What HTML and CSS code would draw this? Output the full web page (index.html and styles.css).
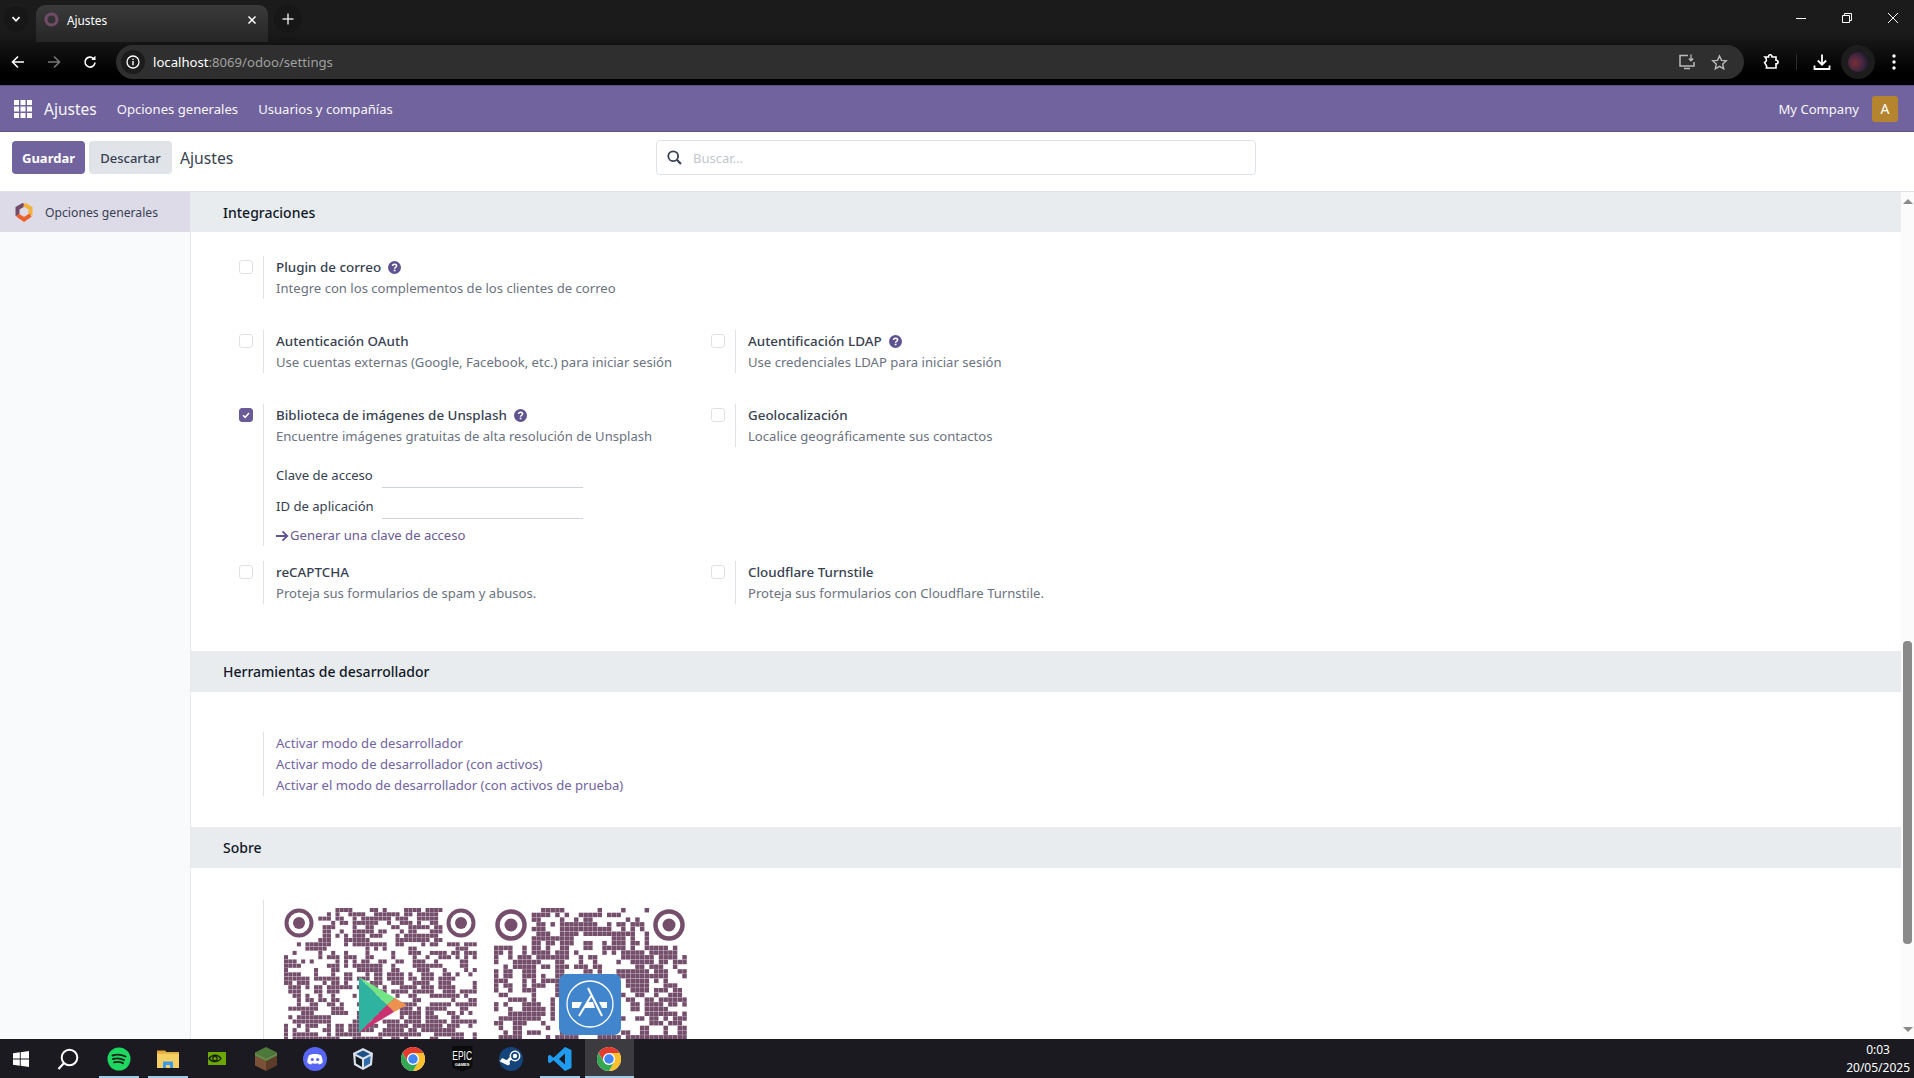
FILE: index.html
```html
<!DOCTYPE html>
<html lang="es">
<head>
    <meta charset="UTF-8">
    <title>Ajustes</title>
    <link rel="stylesheet" href="styles.css">
</head>
<body>
    <!-- Iconos reutilizados -->
    <svg class="defs" aria-hidden="true">
        <symbol id="help" viewBox="0 0 12 12">
            <circle cx="6" cy="6" r="6" fill="#5f5290"/>
            <path d="M4.2 4.7C4.2 3.6 5 3 6 3s1.9.6 1.9 1.6c0 1.4-1.8 1.3-1.8 2.5" fill="none" stroke="#fff" stroke-width="1.4"/>
            <rect x="5.3" y="8" width="1.6" height="1.5" fill="#fff"/>
        </symbol>
        <symbol id="chrome" viewBox="-24 -24 48 48">
            <circle r="24" fill="#fff"/>
            <path d="M-20.8-12A24 24 0 0 1 20.8-12H0A12 12 0 0 0-10.4 6Z" fill="#e33b2e"/>
            <path d="M-20.8-12A24 24 0 0 1 20.8-12H0A12 12 0 0 0-10.4 6Z" fill="#fbc02d" transform="rotate(120)"/>
            <path d="M-20.8-12A24 24 0 0 1 20.8-12H0A12 12 0 0 0-10.4 6Z" fill="#34a853" transform="rotate(240)"/>
            <circle r="9.5" fill="#4285f4"/>
        </symbol>
    </svg>

    <!-- Navegador: pestañas -->
    <div class="browser">
        <div class="tabstrip">
            <div class="tab-search">
                <svg width="10" height="10" viewBox="0 0 10 10"><path d="M1.5 3.2 5 6.8l3.5-3.6" fill="none" stroke="#fff" stroke-width="1.7"/></svg>
            </div>
            <div class="tab">
                <svg width="15" height="15" viewBox="0 0 15 15"><circle cx="7.5" cy="7.5" r="5.5" fill="none" stroke="#714b67" stroke-width="3.2"/></svg>
                <span class="tab-title">Ajustes</span>
                <svg class="tab-close" width="10" height="10" viewBox="0 0 10 10"><path d="M1.5 1.5l7 7M8.5 1.5l-7 7" stroke="#fff" stroke-width="1.5"/></svg>
            </div>
            <div class="tab-new">
                <svg width="12" height="12" viewBox="0 0 12 12"><path d="M6 .5v11M.5 6h11" stroke="#ddd" stroke-width="1.5"/></svg>
            </div>
            <div class="window-controls">
                <svg width="12" height="12" viewBox="0 0 12 12"><path d="M1 6.5h10" stroke="#fff"/></svg>
                <svg width="12" height="12" viewBox="0 0 12 12"><path d="M1.5 3.5h7v7h-7zM3.5 3.5v-2h7v7h-2" fill="none" stroke="#fff"/></svg>
                <svg width="12" height="12" viewBox="0 0 12 12"><path d="M1 1l10 10M11 1 1 11" stroke="#fff"/></svg>
            </div>
        </div>

        <!-- Navegador: barra de direcciones -->
        <div class="toolbar">
            <svg class="nav-icon" width="16" height="16" viewBox="0 0 16 16"><path d="M14 8H2.5M8 2.5 2.5 8 8 13.5" fill="none" stroke="#fff" stroke-width="1.6"/></svg>
            <svg class="nav-icon" width="16" height="16" viewBox="0 0 16 16"><path d="M2 8h11.5M8 2.5 13.5 8 8 13.5" fill="none" stroke="#777" stroke-width="1.6"/></svg>
            <svg class="nav-icon" width="16" height="16" viewBox="0 0 16 16"><path d="M13 8.5A5 5 0 1 1 11.5 4.5" fill="none" stroke="#fff" stroke-width="1.6"/><path d="M13.5 1.8V6H9.3z" fill="#fff"/></svg>
            <div class="omnibox">
                <span class="site-info">
                    <svg width="14" height="14" viewBox="0 0 14 14"><circle cx="7" cy="7" r="6" fill="none" stroke="#fff" stroke-width="1.3"/><path d="M7 6v4.2M7 3.7V5" stroke="#fff" stroke-width="1.4"/></svg>
                </span>
                <span class="url"><span class="url-host">localhost</span>:8069/odoo/settings</span>
                <svg class="omni-icon" width="18" height="18" viewBox="0 0 18 18"><path d="M10 2.5H2V13h14V9M6 15.5h6" fill="none" stroke="#bbb" stroke-width="1.5"/><path d="M13 1.5v6M10.8 5.5 13 7.8l2.2-2.3" fill="none" stroke="#bbb" stroke-width="1.3"/></svg>
                <svg class="omni-icon" width="17" height="17" viewBox="0 0 17 17"><path d="M8.5 2l2 4.4 4.8.5-3.600 3.200 1 4.700-4.200-2.400-4.200 2.400 1-4.700L1.700 6.900l4.800-.5z" fill="none" stroke="#bbb" stroke-width="1.4"/></svg>
            </div>
            <svg class="ext-icon" width="18" height="18" viewBox="0 0 18 18"><path d="M3 4h3.500c0-3 3.500-3 3.500 0H14v3.200c2.800 0 2.800 3.600 0 3.600V15H4.500c.9-3-2-5-2-5.500C5 8.500 5 6 3 4z" fill="none" stroke="#fff" stroke-width="1.6"/></svg>
            <span class="toolbar-sep"></span>
            <svg class="dl-icon" width="18" height="18" viewBox="0 0 18 18"><path d="M9 1.5v10M4.800 7.500 9 11.700l4.200-4.200M1.500 12.500V16h15v-3.500" fill="none" stroke="#fff" stroke-width="1.8"/></svg>
            <span class="profile"><span class="profile-pic"></span></span>
            <svg class="menu-icon" width="4" height="16" viewBox="0 0 4 16"><circle cx="2" cy="2" r="1.7" fill="#fff"/><circle cx="2" cy="8" r="1.7" fill="#fff"/><circle cx="2" cy="14" r="1.7" fill="#fff"/></svg>
        </div>
    </div>

    <!-- Barra de Odoo -->
    <header class="o-navbar">
        <svg class="apps-icon" width="18" height="18" viewBox="0 0 18 18" fill="#fff">
            <rect width="5" height="5"/><rect x="6.5" width="5" height="5"/><rect x="13" width="5" height="5"/>
            <rect y="6.5" width="5" height="5"/><rect x="6.5" y="6.5" width="5" height="5"/><rect x="13" y="6.5" width="5" height="5"/>
            <rect y="13" width="5" height="5"/><rect x="6.5" y="13" width="5" height="5"/><rect x="13" y="13" width="5" height="5"/>
        </svg>
        <span class="brand">Ajustes</span>
        <a class="nav-link">Opciones generales</a>
        <a class="nav-link">Usuarios y compañías</a>
        <span class="company">My Company</span>
        <span class="user-badge">A</span>
    </header>

    <!-- Panel de control -->
    <div class="control-panel">
        <button class="btn btn-primary">Guardar</button>
        <button class="btn btn-secondary">Descartar</button>
        <span class="breadcrumb">Ajustes</span>
        <div class="searchbar">
            <svg width="15" height="15" viewBox="0 0 14 14"><circle cx="5.8" cy="5.8" r="4.6" fill="none" stroke="#374151" stroke-width="1.7"/><path d="M9.2 9.2 13 13" stroke="#374151" stroke-width="2"/></svg>
            <span class="search-placeholder">Buscar...</span>
        </div>
    </div>

    <div class="main">
        <!-- Menú lateral -->
        <aside class="sidebar">
            <div class="side-item">
                <svg width="18" height="20" viewBox="0 0 18 20">
                    <path d="M9 2.5 2.500 6.200v7.600" fill="none" stroke="#714b67" stroke-width="4"/>
                    <path d="M9 2.5l6.500 3.700v7" fill="none" stroke="#f3b23c" stroke-width="4"/>
                    <path d="M2.500 13.200 9 17.500l6.500-4.300" fill="none" stroke="#e8622a" stroke-width="4"/>
                </svg>
                <span>Opciones generales</span>
            </div>
        </aside>

        <!-- Contenido de ajustes -->
        <div class="content">
            <h2 class="section-title section-first">Integraciones</h2>
            <section class="settings-grid">
                <div class="setting">
                    <span class="check"></span>
                    <div class="setting-body">
                        <div class="setting-name">Plugin de correo <svg class="help"><use href="#help"/></svg></div>
                        <div class="setting-desc">Integre con los complementos de los clientes de correo</div>
                    </div>
                </div>
                <div></div>

                <div class="setting">
                    <span class="check"></span>
                    <div class="setting-body">
                        <div class="setting-name">Autenticación OAuth</div>
                        <div class="setting-desc">Use cuentas externas (Google, Facebook, etc.) para iniciar sesión</div>
                    </div>
                </div>
                <div class="setting">
                    <span class="check"></span>
                    <div class="setting-body">
                        <div class="setting-name">Autentificación LDAP <svg class="help"><use href="#help"/></svg></div>
                        <div class="setting-desc">Use credenciales LDAP para iniciar sesión</div>
                    </div>
                </div>

                <div class="setting setting-open">
                    <span class="check checked">
                        <svg width="10" height="10" viewBox="0 0 10 10"><path d="M2 5.200 4.200 7.300 8 3" fill="none" stroke="#fff" stroke-width="1.5"/></svg>
                    </span>
                    <div class="setting-body">
                        <div class="setting-name">Biblioteca de imágenes de Unsplash <svg class="help"><use href="#help"/></svg></div>
                        <div class="setting-desc">Encuentre imágenes gratuitas de alta resolución de Unsplash</div>
                        <div class="field field-first">
                            <label>Clave de acceso</label>
                            <span class="field-input"></span>
                        </div>
                        <div class="field">
                            <label>ID de aplicación</label>
                            <span class="field-input"></span>
                        </div>
                        <a class="key-link">
                            <svg width="13" height="12" viewBox="0 0 13 12"><path d="M0 6h11M6.500 1.300 11.300 6 6.500 10.700" fill="none" stroke="#5f5290" stroke-width="1.8"/></svg>Generar una clave de acceso
                        </a>
                    </div>
                </div>
                <div class="setting">
                    <span class="check"></span>
                    <div class="setting-body">
                        <div class="setting-name">Geolocalización</div>
                        <div class="setting-desc">Localice geográficamente sus contactos</div>
                    </div>
                </div>

                <div class="setting">
                    <span class="check"></span>
                    <div class="setting-body">
                        <div class="setting-name">reCAPTCHA</div>
                        <div class="setting-desc">Proteja sus formularios de spam y abusos.</div>
                    </div>
                </div>
                <div class="setting">
                    <span class="check"></span>
                    <div class="setting-body">
                        <div class="setting-name">Cloudflare Turnstile</div>
                        <div class="setting-desc">Proteja sus formularios con Cloudflare Turnstile.</div>
                    </div>
                </div>
            </section>

            <h2 class="section-title">Herramientas de desarrollador</h2>
            <section class="dev-tools">
                <div class="setting-body">
                    <a class="dev-link">Activar modo de desarrollador</a>
                    <a class="dev-link">Activar modo de desarrollador (con activos)</a>
                    <a class="dev-link">Activar el modo de desarrollador (con activos de prueba)</a>
                </div>
            </section>

            <h2 class="section-title">Sobre</h2>
            <section class="about">
                <div class="qr-row">
                    <svg class="qr" data-modules="45" data-seed="7341" viewBox="0 0 193 193">
                        <circle cx="15" cy="15" r="12.5" fill="none" stroke="#744e6b" stroke-width="4"/>
                        <circle cx="15" cy="15" r="6" fill="#744e6b"/>
                        <circle cx="177" cy="15" r="12.5" fill="none" stroke="#744e6b" stroke-width="4"/>
                        <circle cx="177" cy="15" r="6" fill="#744e6b"/>
                        <path d="M75 69 103 97 75 125Z" fill="#2db3a0"/>
                        <path d="M75 69 111 90 103 97Z" fill="#73e585"/>
                        <path d="M111 90 123 97 110 104 103 97Z" fill="#ec9150"/>
                        <path d="M75 125 103 97 110 104Z" fill="#cb3370"/>
                    </svg>
                    <svg class="qr" data-modules="41" data-seed="2219" viewBox="0 0 193 193">
                        <circle cx="17" cy="17" r="13.5" fill="none" stroke="#744e6b" stroke-width="4.5"/>
                        <circle cx="17" cy="17" r="6.5" fill="#744e6b"/>
                        <circle cx="175" cy="17" r="13.5" fill="none" stroke="#744e6b" stroke-width="4.5"/>
                        <circle cx="175" cy="17" r="6.5" fill="#744e6b"/>
                        <rect x="65" y="66" width="62" height="61" rx="7" fill="#4186cc"/>
                        <circle cx="96" cy="96" r="23" fill="none" stroke="#fff" stroke-width="1.3"/>
                        <path d="M94 80 108 108M97 88 85 108" fill="none" stroke="#fff" stroke-width="2"/>
                        <path d="M78 94h10l-3 6h-7zM93 94h6l2 6H90zM105 94h8v6h-5z" fill="#fff"/>
                    </svg>
                </div>
            </section>
        </div>

        <!-- Barra de desplazamiento -->
        <div class="scrollbar">
            <span class="scroll-up"></span>
            <span class="scroll-thumb"></span>
            <span class="scroll-down"></span>
        </div>
    </div>

    <!-- Barra de tareas de Windows -->
    <footer class="taskbar">
        <div class="task task-win">
            <svg width="16" height="16" viewBox="0 0 16 16" fill="#fff"><path d="M0 2.300 6.800 1.300v6.300H0zM7.700 1.200 16 0v7.600H7.700zM0 8.400h6.800v6.300L0 13.700zM7.700 8.400H16V16l-8.300-1.200z"/></svg>
        </div>
        <div class="task task-find">
            <svg width="22" height="22" viewBox="0 0 22 22"><circle cx="12.5" cy="9.5" r="7.8" fill="none" stroke="#fff" stroke-width="2"/><path d="M7 15 1.500 21" stroke="#fff" stroke-width="2.2"/></svg>
        </div>
        <div class="task open">
            <svg width="24" height="24" viewBox="0 0 24 24"><circle cx="12" cy="12" r="11.5" fill="#1ed760"/><path d="M5.500 8.500c4-1.300 9-1 13 1M6 12c3.500-1 7.500-.8 11 1M7 15.300c3-.8 6-.6 9 .9" fill="none" stroke="#14241a" stroke-width="1.9" stroke-linecap="round"/></svg>
        </div>
        <div class="task open">
            <svg width="22" height="20" viewBox="0 0 22 20"><path d="M0 1.500h8l2 2H0z" fill="#e2a52b"/><rect y="3" width="22" height="16" fill="#f4cf63"/><rect y="3" width="22" height="2" fill="#e5b345"/><path d="M6 19v-6.500h10V19h-3v-3H9v3z" fill="#3d9be9"/></svg>
        </div>
        <div class="task">
            <svg width="18" height="13" viewBox="0 0 18 13"><rect width="18" height="13" fill="#6aa800"/><path d="M1 6.500C4 2.500 10 1.800 13 6.500 10 11 4 10.500 1 6.500z" fill="none" stroke="#1b2108" stroke-width="1.3"/><circle cx="7" cy="6.500" r="2.2" fill="none" stroke="#1b2108" stroke-width="1.2"/></svg>
        </div>
        <div class="task">
            <svg width="22" height="24" viewBox="0 0 22 24"><path d="M11 0 22 5.500 11 11 0 5.500z" fill="#4d7a3a"/><path d="M0 5.500 11 11v13L0 18.500z" fill="#7a5036"/><path d="M22 5.500 11 11v13l11-5.500z" fill="#5c3c28"/><path d="M0 5.500 11 11l11-5.500v3L11 14 0 8.500z" fill="#5d8a48"/></svg>
        </div>
        <div class="task">
            <svg width="24" height="24" viewBox="0 0 24 24"><circle cx="12" cy="12" r="12" fill="#5865f2"/><path d="M6 8.300c3.500-1.800 8.500-1.800 12 0 1.300 2.500 1.800 5 1.600 7.500-1.300 1-2.600 1.500-3.700 1.800l-.9-1.400c-2 .6-4 .6-6 0l-.9 1.400c-1.100-.3-2.400-.8-3.700-1.800C4.200 13.300 4.700 10.800 6 8.300z" fill="#fff"/><circle cx="9.300" cy="12.500" r="1.6" fill="#5865f2"/><circle cx="14.700" cy="12.500" r="1.6" fill="#5865f2"/></svg>
        </div>
        <div class="task task-vbox">
            <svg width="22" height="24" viewBox="0 0 22 24"><path d="M11 1 21 6l-1 12-9 5-9-5L1 6z" fill="#d8e0ea"/><path d="M11 3.500 18 7l-7 3.500L4 7z" fill="#1d4f86"/><path d="M3.500 9 10 12.500V20l-6-3.400z" fill="#14181f"/><path d="M18.500 9 12 12.500V20l6-3.400z" fill="#2f6ba8"/></svg>
        </div>
        <div class="task"><svg width="24" height="24"><use href="#chrome"/></svg></div>
        <div class="task">
            <div class="epic"><span class="epic-big">EPIC</span><span class="epic-small">GAMES</span></div>
        </div>
        <div class="task">
            <svg width="24" height="24" viewBox="0 0 24 24"><circle cx="12" cy="12" r="12" fill="#14447a"/><path d="M0 13.500 7 16.500 11 13" fill="#fff"/><path d="M1 14.500 8 18c2.500 1 4-2 2-3.800L3 11z" fill="#fff"/><circle cx="16" cy="9" r="4.7" fill="none" stroke="#fff" stroke-width="1.5"/><circle cx="16" cy="9" r="2.2" fill="#fff"/><path d="M12 11 8 15" stroke="#fff" stroke-width="3"/></svg>
        </div>
        <div class="task open">
            <svg width="24" height="24" viewBox="0 0 24 24"><path d="M17 0 23.500 3V21L17 24 5.500 13.200 1.800 16.200 0 15V9l1.800-1.200 3.700 3L17 0zm0 6.500-6 5.500 6 5.500z" fill="#1f9cf0"/></svg>
        </div>
        <div class="task active">
            <svg width="24" height="24"><use href="#chrome"/></svg>
        </div>
        <div class="clock">
            <div>0:03</div>
            <div>20/05/2025</div>
        </div>
    </footer>

    <script src="qr.js"></script>
</body>
</html>
```

FILE: styles.css
```css
/* General */
* {
    box-sizing: border-box;
}

body {
    margin: 0;
    height: 1078px;
    display: flex;
    flex-direction: column;
    overflow: hidden;
    font-family: "Noto Sans", "Open Sans", sans-serif;
    font-size: 13.1px;
    color: #374151;
    background-color: #ffffff;
}

.defs {
    width: 0;
    height: 0;
    display: block;
}

/* Navegador */
.browser {
    flex: none;
    height: 85px;
    background: linear-gradient(#1b1b1b 0, #1b1b1b 32px, #000000 74px);
}

.tabstrip {
    height: 42px;
    display: flex;
    align-items: flex-end;
    padding-left: 4px;
    color: #ffffff;
}

.tab-search {
    width: 24px;
    height: 26px;
    margin: 0 8px 10px 0;
    display: flex;
    align-items: center;
    justify-content: center;
    border-radius: 50%;
    background-color: #171717;
}

.tab {
    width: 232px;
    height: 37px;
    display: flex;
    align-items: center;
    padding: 0 11px 8px 8px;
    border-radius: 9px 9px 0 0;
    background: linear-gradient(#3a3a3a, #262626);
    font-size: 11.8px;
}

.tab-title {
    margin-left: 8px;
}

.tab-close {
    margin-left: auto;
}

.tab-new {
    width: 28px;
    height: 28px;
    margin: 0 0 9px 6px;
    display: flex;
    align-items: center;
    justify-content: center;
    border-radius: 50%;
    background-color: #171717;
}

.window-controls {
    margin-left: auto;
    height: 36px;
    display: flex;
    align-items: center;
    gap: 34px;
    padding: 0 15px 12px 0;
}

.toolbar {
    height: 43px;
    display: flex;
    align-items: center;
    padding: 0 0 3px 10px;
}

.nav-icon {
    margin-right: 20px;
}

.omnibox {
    flex: none;
    width: 1628px;
    height: 34px;
    margin-left: -2px;
    display: flex;
    align-items: center;
    padding: 0 16px 0 5px;
    border-radius: 17px;
    background-color: #2f2f2f;
    font-size: 13.15px;
    color: #a0a0a0;
}

.site-info {
    width: 24px;
    height: 24px;
    display: flex;
    align-items: center;
    justify-content: center;
    border-radius: 50%;
    background-color: #1c1c1c;
}

.url {
    margin-left: 8px;
    white-space: nowrap;
}

.url-host {
    color: #ffffff;
}

.omni-icon {
    margin-left: 15px;
}

.url + .omni-icon {
    margin-left: auto;
}

.ext-icon {
    margin-left: 18px;
}

.toolbar-sep {
    width: 1px;
    height: 16px;
    margin: 0 16px;
    background-color: #2c2c2c;
}

.profile {
    width: 34px;
    height: 34px;
    margin-left: 10px;
    display: flex;
    align-items: center;
    justify-content: center;
    border-radius: 50%;
    background-color: #1d1d1d;
}

.profile-pic {
    width: 20px;
    height: 20px;
    border-radius: 50%;
    background: radial-gradient(circle at 35% 55%, #7a2f3a, #34223f 60%, #111118);
}

.menu-icon {
    margin-left: 17px;
}

/* Barra de Odoo */
.o-navbar {
    flex: none;
    height: 47px;
    display: flex;
    align-items: center;
    padding: 0 16px 0 14px;
    background-color: #71639e;
    border-top: 1px solid #5b4f80;
    border-bottom: 1px solid #5f5288;
    color: #ffffff;
}

.brand {
    margin-left: 12px;
    font-size: 15.5px;
    opacity: 0.95;
}

.nav-link {
    margin-left: 20px;
    opacity: 0.95;
}

.company {
    margin-left: auto;
    opacity: 0.95;
}

.user-badge {
    width: 26px;
    height: 26px;
    margin-left: 13px;
    display: flex;
    align-items: center;
    justify-content: center;
    border-radius: 3px;
    background-color: #b5842f;
    font-size: 14px;
}

/* Panel de control */
.control-panel {
    flex: none;
    height: 60px;
    display: flex;
    align-items: center;
    padding: 0 0 8px 12px;
    border-bottom: 1px solid #dee2e6;
}

.btn {
    height: 33px;
    border: none;
    border-radius: 4px;
    font-family: inherit;
    font-size: 13px;
    padding: 0;
}

.btn-primary {
    width: 73px;
    background-color: #71639e;
    color: #ffffff;
    font-weight: 700;
}

.btn-secondary {
    width: 83px;
    margin-left: 4px;
    background-color: #e0e3e8;
    color: #374151;
    font-weight: 500;
}

.breadcrumb {
    width: 476px;
    margin-left: 8px;
    font-size: 15.7px;
}

.searchbar {
    width: 600px;
    height: 35px;
    display: flex;
    align-items: center;
    padding-left: 10px;
    border: 1px solid #dee2e6;
    border-radius: 4px;
}

.search-placeholder {
    margin-left: 11px;
    color: #c3c7cd;
    font-size: 13px;
}

/* Contenido principal */
.main {
    flex: 1;
    min-height: 0;
    display: flex;
    overflow: hidden;
}

.sidebar {
    flex: none;
    width: 191px;
    background-color: #f9fafb;
    border-right: 1px solid #e7e9ed;
}

.side-item {
    height: 40px;
    display: flex;
    align-items: center;
    gap: 12px;
    padding-left: 15px;
    background-color: #dedbe8;
    font-size: 12.2px;
}

.content {
    flex: none;
    width: 1710px;
    overflow: hidden;
}

.section-title {
    height: 41px;
    margin: 0;
    padding-left: 32px;
    line-height: 41px;
    font-size: 14px;
    font-weight: 500;
    color: #111827;
    background-color: #e9ecef;
}

.section-first {
    height: 40px;
    line-height: 42px;
}

.settings-grid {
    display: grid;
    grid-template-columns: 472px 472px;
    align-items: start;
    padding: 24px 0 16px 48px;
}

.setting {
    display: flex;
    margin-bottom: 31px;
}

.setting-open {
    margin-bottom: 15px;
}

.check {
    flex: none;
    width: 14px;
    height: 14px;
    margin: 4px 10px 0 0;
    display: flex;
    align-items: center;
    justify-content: center;
    border: 1px solid #dee2e6;
    border-radius: 3px;
}

.checked {
    border-color: #6a5a98;
    background-color: #6a5a98;
}

.setting-body {
    padding: 1px 0 0 12px;
    border-left: 1px solid #dee2e6;
    line-height: 21px;
}

.setting-name {
    display: flex;
    align-items: center;
    font-size: 13.4px;
    font-weight: 500;
}

.help {
    width: 13px;
    height: 13px;
    margin-left: 7px;
}

.setting-desc {
    color: #6b7280;
}

.field {
    height: 31px;
    display: flex;
    align-items: flex-end;
}

.field-first {
    margin-top: 10px;
}

.field label {
    width: 106px;
    padding-bottom: 2px;
}

.field-input {
    width: 201px;
    height: 1px;
    background-color: #ced4da;
}

.key-link {
    display: flex;
    align-items: center;
    margin-top: 6px;
    color: #6b5b93;
}

.key-link svg {
    margin-right: 1px;
}

.dev-tools {
    padding: 40px 0 31px 72px;
}

.dev-link {
    display: block;
    color: #71639e;
}

.about {
    padding: 32px 0 0 72px;
}

.qr-row {
    height: 300px;
    display: flex;
    gap: 17px;
    padding: 8px 0 0 20px;
    border-left: 1px solid #dee2e6;
}

.qr {
    width: 193px;
    height: 193px;
}

/* Barra de desplazamiento */
.scrollbar {
    flex: 1;
    display: flex;
    flex-direction: column;
    align-items: center;
    background-color: #fbfbfb;
}

.scroll-up, .scroll-down {
    width: 0;
    height: 0;
    border-left: 5px solid transparent;
    border-right: 5px solid transparent;
}

.scroll-up {
    margin-top: 7px;
    border-bottom: 5px solid #8a8a8a;
}

.scroll-thumb {
    width: 9px;
    height: 303px;
    margin: 437px 0 83px;
    border-radius: 4px;
    background-color: #8a8a8a;
}

.scroll-down {
    border-top: 5px solid #8a8a8a;
}

/* Barra de tareas */
.taskbar {
    flex: none;
    height: 39px;
    display: flex;
    align-items: center;
    background-color: #1a1a20;
    color: #ffffff;
}

.task {
    flex: none;
    width: 49px;
    height: 39px;
    display: flex;
    align-items: center;
    justify-content: center;
}

.task-win {
    width: 41px;
}

.task-find {
    width: 53.5px;
}

.task-vbox {
    padding-right: 3px;
}

.open {
    background: linear-gradient(#9fcbe9, #9fcbe9) center bottom / 40px 2px no-repeat;
}

.active {
    background: linear-gradient(#9fcbe9, #9fcbe9) center bottom / 100% 2px no-repeat, #3b3b40;
}

.epic {
    width: 21px;
    height: 26px;
    display: flex;
    flex-direction: column;
    align-items: center;
    padding-top: 3px;
    background-color: #0c0c0c;
    clip-path: polygon(0 0, 100% 0, 100% 85%, 50% 100%, 0 85%);
    font-family: "Liberation Sans", sans-serif;
    line-height: 1;
}

.epic-big {
    font-size: 13px;
    transform: scaleX(0.65);
}

.epic-small {
    margin-top: 1px;
    font-size: 4px;
    font-weight: 700;
}

.clock {
    margin-left: auto;
    padding-right: 4px;
    text-align: center;
    font-size: 12px;
    line-height: 18px;
}
```

FILE: qr.js
```js
// Dibuja los módulos de cada QR a partir de una semilla
const ns = 'http://www.w3.org/2000/svg';

document.querySelectorAll('.qr').forEach((svg) => {
    const count = Number(svg.dataset.modules);
    const size = 193 / count;
    let seed = Number(svg.dataset.seed);
    let previous = [];

    function next() {
        seed = (seed * 1103515245 + 12345) % 2147483648;
        return seed / 2147483648;
    }

    const first = svg.firstElementChild;
    for (let row = 0; row < count; row++) {
        const cells = [];
        for (let col = 0; col < count; col++) {
            // Tendencia a agrupar módulos con sus vecinos
            let chance = 0.34;
            if (cells[col - 1]) chance += 0.2;
            if (previous[col]) chance += 0.2;
            const filled = next() < chance;
            cells.push(filled);

            const inFinder = row < 8 && (col < 8 || col >= count - 8);
            if (!filled || inFinder) continue;

            const rect = document.createElementNS(ns, 'rect');
            rect.setAttribute('x', col * size);
            rect.setAttribute('y', row * size);
            rect.setAttribute('width', size - 0.25);
            rect.setAttribute('height', size - 0.25);
            rect.setAttribute('fill', '#744e6b');
            svg.insertBefore(rect, first);
        }
        previous = cells;
    }
});
```
